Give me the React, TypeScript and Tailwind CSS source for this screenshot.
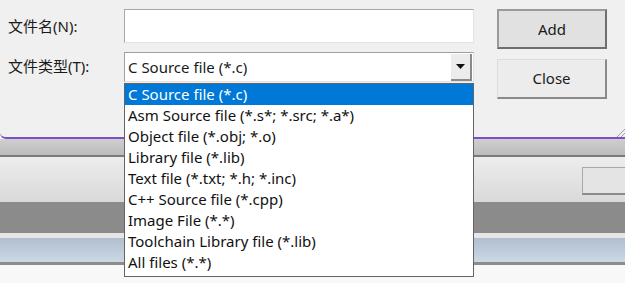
const font = { fontFamily: '"Noto Sans", "Noto Sans CJK SC", sans-serif' }

const fileTypes = [
  'C Source file (*.c)',
  'Asm Source file (*.s*; *.src; *.a*)',
  'Object file (*.obj; *.o)',
  'Library file (*.lib)',
  'Text file (*.txt; *.h; *.inc)',
  'C++ Source file (*.cpp)',
  'Image File (*.*)',
  'Toolchain Library file (*.lib)',
  'All files (*.*)',
]

function WinButton({ label, cls }: { label: string; cls?: string }) {
  return (
    <button
      className={`flex h-[40px] w-[110px] items-center justify-center bg-[#e1e1e1] text-[15px] text-[#1a1a1a] ${cls ?? ''}`}
    >
      {label}
    </button>
  )
}

export default function App() {
  return (
    <div className="relative h-[283px] w-[625px] overflow-hidden bg-[#f8f8f8]" style={font}>
      {/* dialog */}
      <div className="relative h-[139px] rounded-bl-[6px] border-b-2 border-[#7b4fc9] bg-[#f0f0f0]">
        <div className="flex pt-[9px]">
          <div className="flex w-[124px] flex-col pl-[8px] text-[15px] text-[#1a1a1a]">
            <div className="flex h-[34px] items-center">文件名(N):</div>
            <div className="mt-[9px] flex h-[29px] items-center">文件类型(T):</div>
          </div>
          <div className="flex w-[350px] flex-col">
            <div className="h-[34px] border border-[#a8a8a8] border-b-[#e3e3e3] border-r-[#e3e3e3] bg-white" />
            <div className="mt-[9px] flex h-[30px] items-center border border-[#a0a0a0] border-b-[#e3e3e3] border-r-[#e3e3e3] bg-white pl-[3px] text-[15px] text-[#1a1a1a]">
              <span className="flex-1">C Source file (*.c)</span>
              <div className="mr-[1px] flex h-[27px] w-[21px] items-center justify-center border-b-2 border-r-2 border-[#8a8a8a] bg-[#ececec]">
                <svg width="9" height="5" viewBox="0 0 9 5">
                  <path d="M0 0h9L4.5 5z" fill="#111" />
                </svg>
              </div>
            </div>
          </div>
          <div className="ml-[23px] flex flex-col gap-[10px]">
            <WinButton label="Add" cls="border-2 border-[#6e6e6e] border-t-[#9a9a9a] border-l-[#9a9a9a]" />
            <WinButton label="Close" cls="border-b-2 border-r-2 border-[#8a8a8a] border-t border-l border-t-[#dcdcdc] border-l-[#dcdcdc] bg-[#ececec]" />
          </div>
        </div>
        <svg className="absolute bottom-0 right-0" width="9" height="9" viewBox="0 0 9 9">
          <path d="M9 1L1 9M9 5L5 9" stroke="#a0a0a0" strokeWidth="1" />
        </svg>
      </div>

      {/* windows behind */}
      <div className="h-[16px] bg-gradient-to-b from-[#cfcfcf] to-[#bcbcbc]" />
      <div className="h-[2px] bg-[#7a7a7a]" />
      <div className="flex h-[45px] justify-end bg-gradient-to-b from-[#ededed] to-[#d9d9d9] pt-[10px]">
        <div className="h-[28px] w-[43px] border-b-2 border-l border-t border-[#a8a8a8] border-b-[#8a8a8a] bg-[#e4e4e4]" />
      </div>
      <div className="h-[31px] bg-[#8b8b8b]" />
      <div className="h-[5px] bg-[#e6e6e6]" />
      <div className="h-[24px] bg-gradient-to-b from-[#b0bfcf] to-[#cbd8e4]" />
      <div className="h-[3px] bg-[#8c8c8c]" />

      {/* dropdown list */}
      <div className="absolute left-[124px] top-[83px] h-[194px] w-[350px] border border-[#646464] bg-white text-[15px] text-[#111]">
        {fileTypes.map((t, i) => (
          <div
            key={t}
            className={`flex h-[21px] items-center pl-[3px] ${i === 0 ? 'bg-[#0078d7] text-white' : ''}`}
          >
            {t}
          </div>
        ))}
      </div>
    </div>
  )
}
